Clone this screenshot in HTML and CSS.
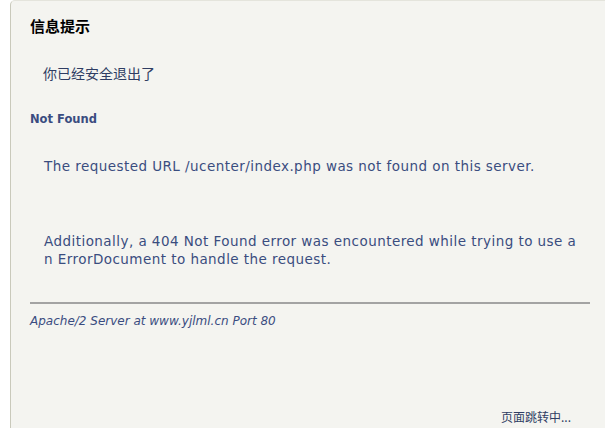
FILE: index.html
```html
<!DOCTYPE html>
<html lang="zh">
<head>
<meta charset="utf-8">
<title>信息提示</title>
<link rel="stylesheet" href="styles.css">
</head>
<body>
<div class="box">
  <h1 class="title">信息提示</h1>
  <div class="message">
    <p class="logout">你已经安全退出了</p>
    <h2 class="nf-title">Not Found</h2>
    <p class="nf-text">The requested URL /ucenter/index.php was not found on this server.</p>
    <p class="nf-text nf-extra">Additionally, a 404 Not Found error was encountered while trying to use an ErrorDocument to handle the request.</p>
    <hr class="rule">
    <address class="server">Apache/2 Server at www.yjlml.cn Port 80</address>
  </div>
  <div class="redirect">页面跳转中...</div>
</div>
</body>
</html>
```

FILE: styles.css
```css
html, body {
  margin: 0;
  padding: 0;
  background: #ffffff;
  height: 100%;
  overflow: hidden;
}
body {
  font-family: "DejaVu Sans", Verdana, "Noto Sans CJK SC", sans-serif;
}
.box {
  margin-left: 10px;
  min-height: 440px;
  background: #f4f4f0;
  border-left: 1px solid #c9c9bb;
  border-top: 1px solid #e4e4dc;
  border-top-left-radius: 5px;
  padding: 16px 15px 0 19px;
  box-sizing: border-box;
}
.title {
  margin: 0;
  font: bold 15px/18px "Noto Sans CJK SC", sans-serif;
  color: #000;
}
.message {
  color: #3a4d7f;
}
.logout {
  margin: 29px 0 0 13px;
  font: 14px/18px "Noto Sans CJK SC", sans-serif;
  color: #2f3d63;
}
.nf-title {
  margin: 29px 0 0 0;
  font: bold 11.5px/16px "DejaVu Sans", Verdana, sans-serif;
  color: #3a4c80;
}
.nf-text {
  margin: 30px 0 0 14px;
  width: 533px;
  font: 13.5px/18px "DejaVu Sans", Verdana, sans-serif;
  letter-spacing: 0.45px;
  word-break: break-all;
}
.nf-extra {
  margin-top: 57px;
}
.rule {
  margin: 34px 0 0 0;
  width: 560px;
  height: 0;
  border: 0;
  border-top: 2px solid #a3a3a3;
}
.server {
  margin-top: 9px;
  font: italic 12px/16px "DejaVu Sans", Verdana, sans-serif;
  color: #3a4c80;
}
.redirect {
  margin: 80px 0 0 471px;
  font: 12px/16px "Noto Sans CJK SC", sans-serif;
  color: #2f3d63;
}
```
